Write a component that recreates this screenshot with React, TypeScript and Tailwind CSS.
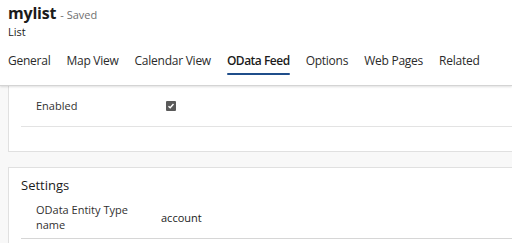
import React from 'react';

const tabs = ['General', 'Map View', 'Calendar View', 'OData Feed', 'Options', 'Web Pages', 'Related'];

const App: React.FC = () => {
  return (
    <div className="w-[512px] h-[243px] overflow-hidden bg-[#f8f8f8] flex flex-col" style={{ fontFamily: '"Open Sans", "Noto Sans", sans-serif' }}>
      {/* Header */}
      <div className="bg-white h-[86px] shrink-0 border-b border-[#d4d4d4] shadow-[0_1px_2px_rgba(0,0,0,0.12)] relative z-10">
        <div className="pl-2 pt-[2px] h-[24px] flex items-baseline gap-1">
          <span className="text-[16px] leading-[22px] font-bold text-[#1b1b1b] tracking-[-0.2px]">mylist</span>
          <span className="text-[11px] text-[#707070]">- Saved</span>
        </div>
        <div className="pl-2 text-[11px] text-[#1b1b1b] leading-[14px] mt-[1px]">List</div>
        <div className="flex pl-2 gap-[16px] mt-[14px]">
          {tabs.map(t => (
            <div key={t} className={`relative whitespace-nowrap text-[12px] leading-[16px] pb-[7px] ${t === 'OData Feed' ? 'font-semibold text-[#1b1b1b] tracking-[-0.5px]' : 'text-[#2b2b2b] tracking-[-0.25px]'}`}>
              {t}
              {t === 'OData Feed' && <div className="absolute left-0 right-0 bottom-[1px] h-[2px] bg-[#1f4d8a] rounded-full" />}
            </div>
          ))}
        </div>
      </div>

      {/* Panel 1 (scrolled) */}
      <div className="ml-2 bg-white border-l border-b border-[#e0e0e0] h-[66px] shrink-0 flex flex-col">
        <div className="flex items-center h-[40px] pl-[27px] text-[11px] text-[#323130]">
          <span className="w-[130px]">Enabled</span>
          <span className="w-[10px] h-[10px] rounded-[1px] bg-[#5a5a5a] flex items-center justify-center">
            <svg width="8" height="8" viewBox="0 0 8 8"><path d="M1.5 4.2 L3.2 5.8 L6.5 2" stroke="white" strokeWidth="1.4" fill="none" /></svg>
          </span>
        </div>
        <div className="ml-3 border-t border-[#e3e3e3]" />
      </div>

      {/* Panel 2 */}
      <div className="ml-2 mt-[15px] bg-white border-l border-t border-[#e0e0e0] flex-1 flex flex-col">
        <div className="pl-3 pt-[8px] text-[13px] text-[#1b1b1b]">Settings</div>
        <div className="flex items-center pl-[27px] mt-[1px] h-[41px]">
          <span className="w-[125px] text-[11px] leading-[15px] text-[#323130]">OData Entity Type<br />name</span>
          <span className="text-[11px] text-[#1b1b1b] pt-[3px]">account</span>
        </div>
        <div className="ml-3 border-t border-[#d6d6d6]" />
      </div>
    </div>
  );
};

export default App;
